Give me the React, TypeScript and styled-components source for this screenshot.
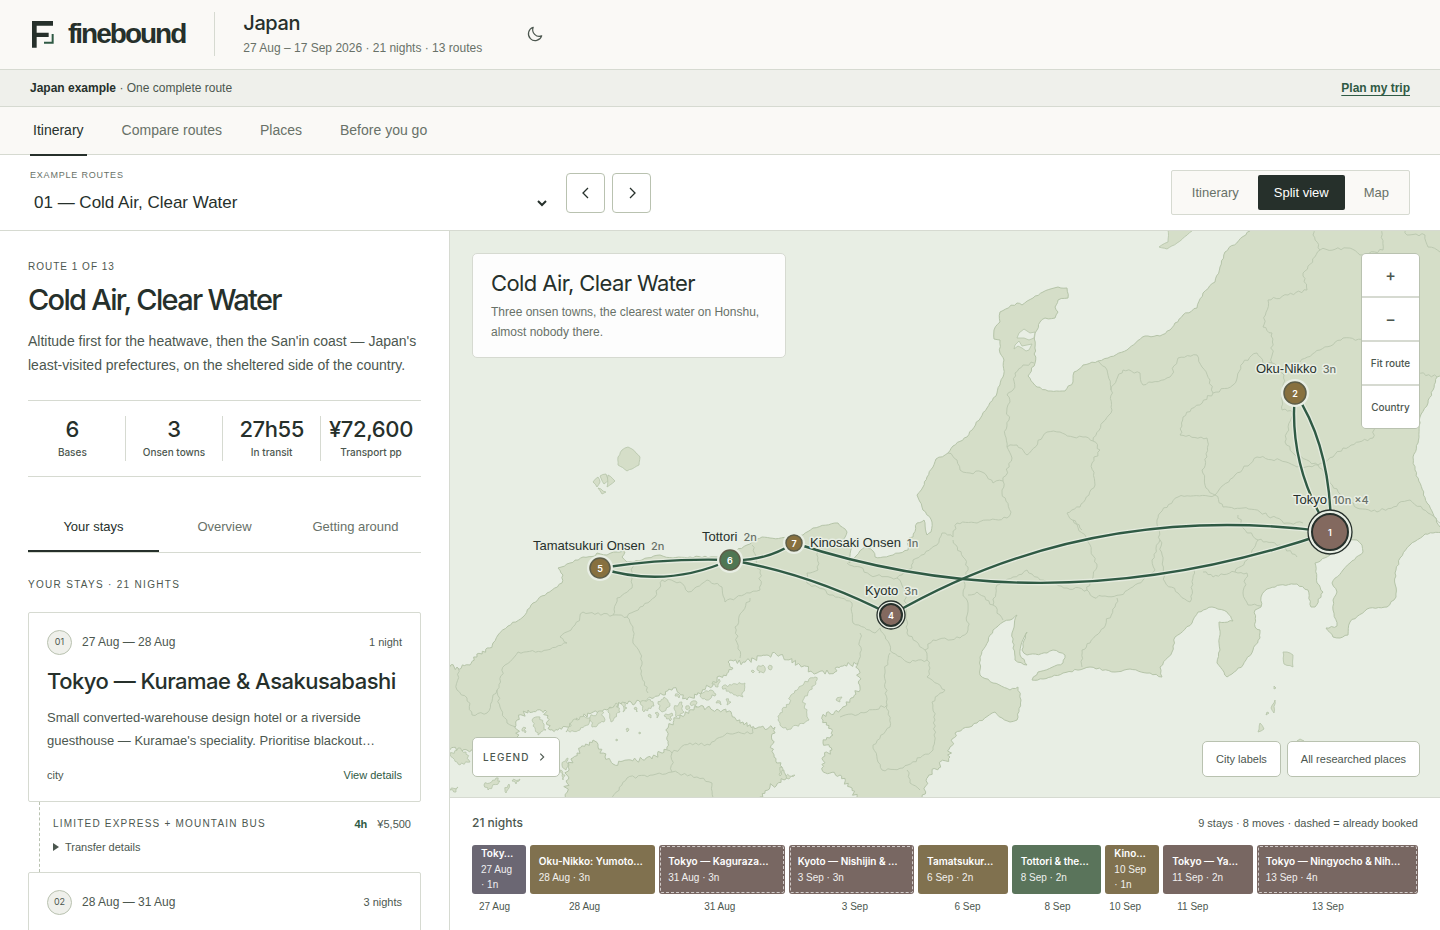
import React from "react";
import styled, { createGlobalStyle, css } from "styled-components";

const c = {
  ink: "#26302b",
  text: "#4c574f",
  muted: "#687168",
  line: "#d6dad1",
  lineStrong: "#b9c2b0",
  paper: "#faf9f6",
  tint: "#eff0eb",
  green: "#2f5a44",
  sea: "#e8eee4",
  land: "#d5dec8",
  coast: "#b5c4a8",
};

const sans = `"Liberation Sans", Arial, sans-serif`;
const wide = `Inter, "Liberation Sans", sans-serif`;

const GlobalStyle = createGlobalStyle`
  *, *::before, *::after { box-sizing: border-box; }
  html, body { margin: 0; background: #fff; }
  body { font-family: ${sans}; color: ${c.ink}; font-size: 13px; }
  button, select { font: inherit; color: inherit; cursor: pointer; }
  h1, h2, h3, p { margin: 0; }
`;

const Page = styled.div`
  display: flex;
  flex-direction: column;
  height: 100vh;
  min-height: 720px;
  overflow: hidden;
`;

/* Header */
const Header = styled.header`
  display: flex;
  align-items: center;
  height: 70px;
  flex: none;
  padding: 0 30px 1px;
  background: ${c.paper};
  border-bottom: 1px solid ${c.line};
`;
const Brand = styled.a`
  display: flex;
  align-items: center;
  gap: 14px;
  padding-right: 29px;
  color: ${c.ink};
  text-decoration: none;
  font: 700 28px/44px ${sans};
  letter-spacing: -2px;
  svg { width: 24px; height: 27px; }
`;
const TripInfo = styled.div`
  padding-left: 28px;
  border-left: 1px solid ${c.line};
  height: 44px;
  display: flex;
  flex-direction: column;
  justify-content: center;
  gap: 4px;
`;
const TripName = styled.div`
  font: 500 20px/24px ${wide};
  letter-spacing: -0.4px;
`;
const TripMeta = styled.div`
  font-size: 12px;
  line-height: 18px;
  color: ${c.muted};
`;
const ThemeButton = styled.button`
  display: grid;
  place-items: center;
  width: 36px;
  height: 36px;
  margin-left: 35px;
  border: 0;
  background: none;
  color: ${c.text};
`;

const Banner = styled.div`
  display: flex;
  align-items: center;
  justify-content: space-between;
  flex: none;
  height: 37px;
  padding: 0 30px;
  background: ${c.tint};
  border-bottom: 1px solid ${c.line};
  font-size: 12px;
  color: ${c.text};
  strong { color: ${c.ink}; font-weight: 700; }
  a {
    color: ${c.green};
    font-weight: 700;
    text-decoration: underline;
    text-underline-offset: 3px;
  }
`;

const MainNav = styled.nav`
  display: flex;
  gap: 32px;
  flex: none;
  height: 48px;
  padding: 0 30px;
  background: ${c.paper};
  border-bottom: 1px solid ${c.line};
`;
const NavLink = styled.a<{ $active?: boolean }>`
  display: flex;
  align-items: center;
  height: 49px;
  padding: 0 3px 2px;
  font-size: 14px;
  font-weight: 500;
  text-decoration: none;
  color: ${(p) => (p.$active ? c.ink : c.muted)};
  border-bottom: 2px solid ${(p) => (p.$active ? c.ink : "transparent")};
`;

const RouteBar = styled.div`
  display: flex;
  align-items: center;
  flex: none;
  height: 76px;
  padding: 0 30px;
  border-bottom: 1px solid ${c.line};
`;
const RoutePicker = styled.div`
  width: 522px;
  flex: 0 1 auto;
  label {
    display: block;
    font-size: 9px;
    line-height: 14px;
    letter-spacing: 0.8px;
    color: ${c.muted};
    margin-top: 3px;
  }
`;
const SelectWrap = styled.div`
  display: flex;
  align-items: center;
  margin-top: 3px;
  select {
    appearance: none;
    flex: 1;
    height: 36px;
    padding: 0 4px;
    border: 0;
    background: transparent;
    font-size: 17px;
  }
  svg { margin: 0 3px 0 -17px; pointer-events: none; }
`;
const Stepper = styled.div`
  display: flex;
  gap: 7px;
  margin-left: 14px;
`;
const StepButton = styled.button`
  display: grid;
  place-items: center;
  width: 39px;
  height: 40px;
  padding: 0;
  border: 1px solid ${c.lineStrong};
  border-radius: 4px;
  background: #fff;
`;
const ViewSwitch = styled.div`
  display: flex;
  gap: 3px;
  margin-left: auto;
  padding: 4px;
  background: ${c.paper};
  border: 1px solid ${c.line};
  border-radius: 2px;
`;
const ViewButton = styled.button<{ $active?: boolean }>`
  height: 35px;
  padding: 0 16px;
  border: 0;
  border-radius: 2px;
  font-size: 13px;
  background: ${(p) => (p.$active ? c.ink : "transparent")};
  color: ${(p) => (p.$active ? "#fff" : c.muted)};
`;

/* Workspace */
const Workspace = styled.main`
  display: flex;
  flex: 1;
  min-height: 0;
`;
const Panel = styled.section`
  flex: 0 0 450px;
  padding: 28px;
  border-right: 1px solid ${c.line};
  overflow-y: auto;
  scrollbar-width: none;
`;
const Eyebrow = styled.div`
  font-size: 10px;
  line-height: 16px;
  letter-spacing: 1px;
  color: ${c.text};
`;
const Title = styled.h1`
  margin-top: 7px;
  font: 500 29px/36px ${wide};
  letter-spacing: -1.7px;
`;
const Lead = styled.p`
  margin-top: 11px;
  font-size: 14px;
  line-height: 24px;
  color: ${c.text};
`;
const Stats = styled.dl`
  display: grid;
  grid-template-columns: repeat(3, 1fr) 100px;
  margin: 23px 0 0;
  padding: 15px 0;
  border: solid ${c.line};
  border-width: 1px 0;
`;
const Stat = styled.div`
  display: flex;
  flex-direction: column-reverse;
  align-items: center;
  height: 45px;
  padding-bottom: 1px;
  justify-content: space-between;
  border-right: 1px solid ${c.line};
  &:first-child { padding-right: 8px; }
  &:last-child { border-right: 0; }
  dt { font: 500 10px/16px ${wide}; color: ${c.text}; }
  dd { margin: 0; font: 500 22px/26px ${wide}; letter-spacing: -0.4px; }
`;
const Tabs = styled.div`
  display: grid;
  grid-template-columns: repeat(3, 1fr);
  margin-top: 25px;
  border-bottom: 1px solid ${c.line};
`;
const Tab = styled.button<{ $active?: boolean }>`
  height: 50px;
  padding: 0;
  border: 0;
  border-bottom: 2px solid ${(p) => (p.$active ? c.ink : "transparent")};
  background: none;
  font-size: 13px;
  font-weight: 500;
  color: ${(p) => (p.$active ? c.ink : c.muted)};
`;
const SectionLabel = styled.h2`
  margin: 24px 0 19px;
  font-size: 10px;
  line-height: 16px;
  font-weight: 400;
  letter-spacing: 1.3px;
  color: ${c.text};
`;
const Card = styled.article`
  min-height: 190px;
  padding: 16px 18px 14px;
  border: 1px solid ${c.line};
  border-radius: 2px;
`;
const CardTop = styled.div`
  display: flex;
  align-items: center;
  gap: 10px;
  color: ${c.text};
  font-size: 12px;
  line-height: 26px;
`;
const Index = styled.span`
  display: grid;
  place-items: center;
  width: 25px;
  height: 25px;
  border: 1px solid ${c.lineStrong};
  border-radius: 50%;
  background: ${c.tint};
  font: 400 9px/12px ${wide};
`;
const Nights = styled.span`
  margin-left: auto;
  font-size: 11px;
`;
const CardTitle = styled.h3`
  margin-top: 10px;
  font: 500 22px/32px ${wide};
  letter-spacing: -0.5px;
  white-space: nowrap;
`;
const CardText = styled.p`
  margin-top: 9px;
  font-size: 13px;
  line-height: 23px;
  color: ${c.text};
`;
const CardFoot = styled.div`
  display: flex;
  justify-content: space-between;
  margin-top: 12px;
  font-size: 11px;
  line-height: 22px;
  color: ${c.text};
  button {
    border: 0;
    padding: 0;
    background: none;
    color: ${c.green};
  }
`;
const Transfer = styled.div`
  height: 70px;
  margin-left: 11px;
  padding: 14px 10px 0 13px;
  border-left: 1px dashed ${c.lineStrong};
  font-size: 11px;
  line-height: 16px;
  color: ${c.text};
  summary { margin-top: 7px; list-style: none; display: flex; align-items: center; gap: 6px; }
`;
const TransferTop = styled.div`
  display: flex;
  span:first-child { flex: 1; font-size: 10px; letter-spacing: 1.2px; }
  strong { margin-right: 10px; color: ${c.green}; }
`;

/* Map side */
const MapSide = styled.section`
  display: flex;
  flex: 1;
  flex-direction: column;
  min-width: 0;
`;
const MapArea = styled.div`
  position: relative;
  flex: 1;
  min-height: 0;
  background: ${c.sea};
  border-bottom: 1px solid ${c.line};
`;
const MapSvg = styled.svg`
  display: block;
  width: 100%;
  height: 100%;
  position: absolute;
  inset: 0;
`;
const MapCard = styled.div`
  position: absolute;
  top: 22px;
  left: 22px;
  width: 314px;
  padding: 12px 18px 15px;
  background: #fdfdfd;
  border: 1px solid ${c.line};
  border-radius: 5px;
  h2 { font: 400 22px/34px ${wide}; letter-spacing: -0.6px; }
  p { margin-top: 2px; font-size: 12px; line-height: 20px; color: ${c.muted}; }
`;
const Zoom = styled.div`
  position: absolute;
  top: 22px;
  right: 20px;
  width: 59px;
  display: flex;
  flex-direction: column;
  gap: 2px;
  background: ${c.line};
  border: 1px solid ${c.lineStrong};
  border-radius: 5px;
  overflow: hidden;
`;
const ZoomButton = styled.button<{ $glyph?: boolean }>`
  height: 42px;
  padding: 0;
  border: 0;
  background: #fff;
  color: ${c.text};
  font: 500 ${(p) => (p.$glyph ? 16 : 10)}px ${wide};
`;
const floating = css`
  background: #fff;
  border: 1px solid ${c.lineStrong};
  border-radius: 5px;
  color: ${c.text};
  font-size: 11px;
  font-weight: 500;
`;
const Legend = styled.button`
  ${floating}
  position: absolute;
  left: 22px;
  bottom: 20px;
  display: flex;
  align-items: center;
  justify-content: space-between;
  width: 88px;
  height: 40px;
  padding: 0 11px 0 10px;
  font: 500 10px ${wide};
  letter-spacing: 1.1px;
`;
const MapToggles = styled.div`
  position: absolute;
  right: 20px;
  bottom: 20px;
  display: flex;
  gap: 6px;
`;
const MapToggle = styled.button`
  ${floating}
  height: 36px;
  padding: 0 13px 1px;
`;

/* Timeline */
const Timeline = styled.div`
  flex: none;
  height: 132px;
  padding: 15px 22px 0;
`;
const TimelineHead = styled.div`
  display: flex;
  justify-content: space-between;
  align-items: center;
  line-height: 20px;
  font-size: 11px;
  color: ${c.text};
  strong { font: 500 12px/20px ${wide}; }
`;
const Blocks = styled.div`
  display: flex;
  gap: 4px;
  margin-top: 12px;
`;
const Block = styled.button<{ $nights: number; $tone: string; $booked?: boolean }>`
  box-sizing: content-box;
  flex: ${(p) => p.$nights} 1 0;
  min-width: 0;
  height: 47px;
  padding: 0 9px 2px;
  border: 0;
  border-radius: 3px;
  background: ${(p) => p.$tone};
  outline: ${(p) => (p.$booked ? "1px dashed rgba(255,255,255,.65)" : "none")};
  outline-offset: -2px;
  color: #fff;
  text-align: left;
  font-size: 10px;
  line-height: 15px;
  strong {
    display: block;
    font: 600 10px/17px ${wide};
    white-space: nowrap;
  }
  span { display: block; opacity: .9; }
`;
const Dates = styled.div`
  display: flex;
  margin-top: 5px;
  font-size: 10px;
  line-height: 16px;
  color: ${c.text};
`;
const DateCell = styled.span<{ $nights: number }>`
  flex: ${(p) => p.$nights} 1 0;
  text-align: center;
`;

const tones = { plum: "#6b6773", gold: "#80714f", rose: "#786762", green: "#5a745b" };
const stays = [
  { name: "Toky…", date: "27 Aug", n: 1, tone: tones.plum },
  { name: "Oku-Nikko: Yumoto…", date: "28 Aug", n: 3, tone: tones.gold },
  { name: "Tokyo — Kaguraza…", date: "31 Aug", n: 3, tone: tones.rose, booked: true },
  { name: "Kyoto — Nishijin & …", date: "3 Sep", n: 3, tone: tones.rose, booked: true },
  { name: "Tamatsukur…", date: "6 Sep", n: 2, tone: tones.gold },
  { name: "Tottori & the…", date: "8 Sep", n: 2, tone: tones.green },
  { name: "Kino…", date: "10 Sep", n: 1, tone: tones.gold },
  { name: "Tokyo — Ya…", date: "11 Sep", n: 2, tone: tones.rose },
  { name: "Tokyo — Ningyocho & Nih…", date: "13 Sep", n: 4, tone: tones.rose, booked: true },
];

/* Map geometry: coordinate pairs separated by spaces */
const honshu =
  "440,668 457,667 470,665 477,657 493,643 498,635 508,626 523,617 533,603 547,593 562,583 563,575 558,568 570,563 583,557 595,556 597,553 607,555 617,552 625,552 622,557 627,562 642,560 660,555 673,558 690,557 717,557 733,552 750,544 762,537 770,538 787,538 803,535 813,528 838,523 847,532 843,542 852,547 849,563 856,556 865,547 873,551 875,557 883,557 893,555 908,550 907,540 913,537 917,523 924,520 927,535 931,532 932,522 922,507 917,495 923,487 927,477 933,467 936,459 948,453 953,446 967,437 987,408 997,393 1003,377 1004,360 1000,353 1000,340 994,339 994,330 1000,322 1000,312 1017,303 1022,305 1033,298 1043,292 1058,287 1067,288 1068,298 1058,300 1055,307 1058,312 1055,318 1045,318 1040,322 1037,330 1035,333 1035,363 1028,376 1037,387 1048,391 1065,391 1073,382 1074,372 1083,365 1098,361 1108,358 1127,350 1145,336 1160,336 1170,330 1183,315 1197,308 1203,293 1215,282 1220,267 1225,252 1250,231 1260,220 1450,220 1450,370 1437,377 1433,390 1428,403 1420,417 1418,443 1413,457 1415,470 1427,503 1440,527 1450,532 1433,533 1425,534 1410,545 1400,558 1395,573 1396,597 1387,607 1367,609 1350,622 1348,635 1340,638 1333,637 1326,628 1337,626 1333,610 1333,600 1337,592 1332,583 1343,570 1350,563 1363,552 1362,545 1357,540 1347,540 1330,555 1315,563 1317,583 1323,592 1315,607 1311,607 1308,590 1297,584 1280,585 1267,589 1261,597 1261,607 1255,610 1255,627 1260,630 1260,638 1253,650 1243,665 1227,677 1217,663 1220,650 1219,622 1233,621 1227,612 1212,607 1198,612 1192,623 1175,637 1172,652 1160,667 1162,677 1150,673 1130,669 1115,672 1090,667 1063,673 1043,679 1032,680 1038,672 1063,663 1065,655 1053,650 1047,653 1027,655 1022,650 1027,632 1021,645 1020,655 1027,665 1015,660 1012,633 1017,615 1010,620 1003,622 993,630 980,657 980,675 993,683 1010,690 1018,687 1021,700 1017,720 1010,722 1002,718 995,712 977,723 955,733 950,747 950,757 932,772 922,797 920,810 860,810 857,797 850,787 840,775 822,770 823,757 832,750 823,743 833,735 823,720 822,717 840,710 860,687 858,663 837,667 835,672 817,673 800,665 780,655 767,655 743,662 728,662 733,668 717,680 697,695 687,700 673,688 663,695 643,702 623,703 607,710 583,717 567,727 550,730 545,710 528,710 517,720 517,737 495,745 467,750 440,750";
const shikoku =
  "563,810 567,783 568,767 577,753 593,740 598,747 605,757 613,764 627,760 652,759 667,747 668,728 677,718 697,707 723,710 743,722 757,728 775,727 772,740 773,753 782,767 787,777 770,787 760,797 755,810";
const islands = [
  "815,677 817,680 803,700 809,720 787,730 780,725 778,720 780,713 790,702 790,697 810,678",
  "628,447 632,449 640,457 639,465 632,469 627,471 618,465 618,457 622,450",
  "593,482 598,477 600,482 597,487",
  "600,476 606,474 609,480 604,484",
  "608,475 615,481 607,487",
  "598,488 606,492 602,494",
  "1168,220 1168,242 1159,247 1167,249 1177,243 1192,231 1200,220",
  "722,687 745,683 743,697 730,693",
  "1283,652 1287,652 1293,655 1293,667 1284,664",
  "1275,700 1274,713 1271,708",
  "1260,723 1264,729 1258,732",
  "1267,712 1269,713 1266,715",
  "1274,686 1276,688 1274,689",
  "1297,741 1300,739 1304,741",
  "532,720 540,717 546,730 538,735",
  "522,729 526,728 525,733",
  "572,722 584,716 592,720 580,730 566,732",
  "590,717 602,711 604,722 592,727",
  "608,712 616,703 620,712 611,722",
  "622,702 627,708 623,712",
  "640,703 650,699 654,706 644,712",
  "658,704 664,697 670,706 662,712",
  "674,708 682,702 684,712 676,717",
  "664,716 672,713 670,721",
  "655,713 659,714 657,718",
  "648,716 651,715 651,718",
  "634,709 637,708 637,712",
  "686,706 690,708 687,710",
  "675,696 678,694 679,698",
  "700,696 710,690 716,694 706,700",
  "712,684 719,679 718,687",
  "690,704 696,701 697,707",
  "726,699 731,702 727,705",
  "716,703 720,701 721,705",
  "757,668 763,665 765,671 759,673",
  "768,667 772,666 771,670",
  "751,671 753,670 753,673",
  "836,700 842,697 840,702",
  "450,755 458,748 466,752 470,762 460,765",
  "484,785 496,778 500,781 488,790",
  "505,790 509,784 506,793",
  "512,781 520,779 516,784",
  "450,790 458,787 456,792",
  "562,765 568,758 566,770",
  "565,775 560,770 563,780",
  "626,729 629,730 627,732",
  "639,732 641,733 639,734",
  "616,739 618,740 616,741",
  "780,767 783,770 780,776",
  "786,776 795,775 789,779",
];
const borders = [
  "948,453 957,460 960,470 970,473 982,472 993,483 1003,481 1012,458 1007,447 1005,435 1009,420 1007,408 1010,402 1007,395 1013,390 1015,373 1023,365 1034,363",
  "1003,481 1002,493 1011,512 1007,518 987,520 977,523 957,523 953,537 942,533 937,545 913,560 912,568 897,578 870,575 860,567 847,563",
  "897,578 905,592 907,633 925,650 933,640 960,638 968,630 967,600 963,593 968,567 963,557 953,540",
  "1007,447 1017,445 1027,455 1047,432 1060,432 1073,437 1083,437 1093,441 1103,422 1111,413 1111,390 1107,370 1098,361",
  "1111,390 1123,370 1140,373 1143,385 1170,377 1178,358 1197,355 1202,367 1210,380 1213,393 1233,385 1243,363 1257,353 1263,363 1272,363 1272,333 1263,327 1268,300 1288,295 1307,290 1303,273 1320,250 1313,235 1313,225",
  "1320,250 1347,248 1363,255 1383,250 1382,225",
  "1402,225 1407,235 1425,235 1428,247 1440,252",
  "1300,362 1320,350 1343,338 1377,342 1400,350 1415,372 1437,377",
  "1272,363 1284,375 1282,410 1293,412 1285,442 1295,455 1318,465 1333,457 1343,448 1373,438 1375,427 1385,385 1410,376",
  "1213,393 1183,417 1180,435 1207,438 1207,457 1202,470 1206,488 1215,495 1235,475 1257,457 1280,460 1297,467 1318,465 1330,483 1357,508 1377,512 1410,500 1428,513 1440,523",
  "1215,495 1223,507 1243,508 1260,512 1287,523 1303,523",
  "1215,495 1178,497 1160,513 1157,520 1160,540 1152,560 1155,570 1143,580 1120,595 1093,597 1087,590 1090,583 1097,567 1087,540 1073,520",
  "1117,598 1115,607 1100,632 1090,643 1082,650 1082,667",
  "1160,540 1165,582 1178,593 1190,602 1194,570",
  "1203,572 1213,577 1235,572 1247,573 1243,593 1248,605 1261,606",
  "1235,572 1247,560 1258,540 1243,528 1238,515",
  "1258,540 1280,545 1297,557",
  "1093,441 1100,450 1092,463 1095,485 1080,507 1067,513 1082,530",
  "1087,590 1067,588 1040,580 1027,570 1013,577 997,585 993,605 977,592 968,595",
  "993,605 1003,620",
  "818,545 818,570 807,573 807,583 833,595 852,603 853,623 875,633 880,628 893,653 907,662 927,660 925,650",
  "927,660 930,668 927,677 945,690 932,702 935,720 933,750 903,768 882,770 873,745 890,727 887,705 885,670 890,653",
  "887,705 867,712 840,717",
  "860,633 860,653 858,663",
  "907,770 910,783 920,790",
  "632,563 632,588 617,598 613,615 627,617 633,627 633,643 640,653 642,677 648,693",
  "613,615 583,612 575,625 560,637 567,643 547,650 518,652 505,665 497,690 500,707 507,723 516,727",
  "458,668 457,690 467,698 472,715 487,713 493,695 497,690",
  "627,617 640,607 655,597 662,580 680,582 688,592 707,580 722,587 725,602 750,593 760,590 760,573 752,545",
  "750,598 735,627 740,658",
  "612,800 627,778 653,775 672,772 672,753 667,750",
  "672,753 690,743 710,745 727,733 753,733 753,727",
  "672,772 697,777 712,783 713,800",
];

// Adds small repeatable bends so that straight runs read as natural coastline.
function rugged(points: string, amount: number, closed: boolean) {
  const pts = points.split(" ").map((p) => p.split(",").map(Number));
  let seed = pts.length * 97 + pts[0][0];
  const rand = () => {
    seed = (seed * 16807) % 2147483647;
    return seed / 2147483647 - 0.5;
  };
  const all = closed ? [...pts, pts[0]] : pts;
  let d = `M${all[0][0]} ${all[0][1]}`;
  for (let i = 1; i < all.length; i++) {
    const [x0, y0] = all[i - 1];
    const [x1, y1] = all[i];
    const len = Math.hypot(x1 - x0, y1 - y0);
    // The Inland Sea and the Kii coast are far more broken than the rest.
    const isBroken = closed && x0 < 960 && y0 > 652;
    const steps = Math.max(1, Math.round(len / (isBroken ? 2 : 3)));
    for (let s = 1; s < steps; s++) {
      const t = s / steps;
      const off = rand() * amount * (isBroken ? 3 : 1);
      d += `L${(x0 + (x1 - x0) * t - ((y1 - y0) / len) * off).toFixed(1)} ${(y0 + (y1 - y0) * t + ((x1 - x0) / len) * off).toFixed(1)}`;
    }
    d += `L${x1} ${y1}`;
  }
  return closed ? d + "Z" : d;
}

const legs = [
  "M1330 532Q1288 466 1295 393",
  "M1295 393Q1331 446 1331 532",
  "M891 615Q1089 500 1330 532",
  "M794 543Q1052 628 1330 532",
  "M891 615Q812 574 730 560",
  "M730 560Q665 558 600 568",
  "M730 560Q665 589 600 568",
  "M730 560Q765 562 794 543",
];
const stops = [
  { n: 5, x: 600, y: 568, r: 10, fill: "#87703f", name: "Tamatsukuri Onsen", extra: "2n", lx: 533, ly: 550 },
  { n: 6, x: 730, y: 560, r: 10, fill: "#4f7653", name: "Tottori", extra: "2n", lx: 702, ly: 541 },
  { n: 7, x: 794, y: 543, r: 8, fill: "#87703f", name: "Kinosaki Onsen", extra: "1n", lx: 810, ly: 547 },
  { n: 4, x: 891, y: 615, r: 11, fill: "#83695f", name: "Kyoto", extra: "3n", lx: 865, ly: 595, ring: 14 },
  { n: 2, x: 1295, y: 393, r: 11, fill: "#87703f", name: "Oku-Nikko", extra: "3n", lx: 1256, ly: 373 },
  { n: 1, x: 1330, y: 532, r: 18, fill: "#83695f", name: "Tokyo", extra: "10n ×4", lx: 1293, ly: 504, ring: 22 },
];

const PlaceName = styled.text`
  font: 500 13px ${sans};
  fill: ${c.ink};
  stroke: ${c.sea};
  stroke-width: 3px;
  stroke-linejoin: round;
  paint-order: stroke;
`;
const PlaceNights = styled.tspan`
  font: 500 11px ${wide};
  fill: ${c.muted};
`;
const StopNumber = styled.text`
  font: 600 9px ${wide};
  fill: #fff;
  text-anchor: middle;
`;

function RouteMap() {
  return (
    <MapSvg viewBox="450 231 990 566" preserveAspectRatio="xMidYMid slice" role="img" aria-label="Route map of Japan">
      <g fill={c.land} stroke={c.coast} strokeWidth="1" strokeLinejoin="round">
        <path d={rugged(honshu, 1.8, true)} />
        <path d={rugged(shikoku, 1.8, true)} />
        {islands.map((p) => (
          <path key={p} d={rugged(p, 1, true)} strokeWidth="0.8" />
        ))}
      </g>
      <g fill={c.sea} stroke={c.coast} strokeWidth="0.8">
        <path d="M1035 332L1030 333L1024 329L1019 333L1017 338L1024 338L1029 340L1034 338Z" />
        <path d="M1014 349L1015 345L1019 341L1022 346L1032 344L1029 350L1026 351L1022 348L1018 346Z" />
      </g>
      <g fill="none" stroke="#b9c6ae" strokeWidth="0.9" strokeLinejoin="round">
        {borders.map((p) => (
          <path key={p} d={rugged(p, 3, false)} />
        ))}
      </g>
      <g fill="none" strokeLinecap="butt">
        {legs.map((d) => (
          <path key={d} d={d} stroke={c.sea} strokeWidth="5" opacity="0.8" />
        ))}
        {legs.map((d) => (
          <path key={d} d={d} stroke={c.green} strokeWidth="2.4" />
        ))}
      </g>
      {stops.map((s) => (
        <g key={s.n}>
          {s.ring ? (
            <circle cx={s.x} cy={s.y} r={s.ring} fill={c.sea} stroke={c.ink} strokeWidth="1.3" />
          ) : (
            <circle cx={s.x} cy={s.y} r={s.r + 3} fill={c.sea} />
          )}
          <circle cx={s.x} cy={s.y} r={s.r} fill={s.fill} stroke={s.ring ? c.ink : "#5d5d48"} strokeWidth={s.ring ? 2 : 1.5} />
          <StopNumber x={s.x} y={s.y + 4}>{s.n}</StopNumber>
          <PlaceName x={s.lx} y={s.ly}>
            {s.name}
            <PlaceNights dx="6">{s.extra}</PlaceNights>
          </PlaceName>
        </g>
      ))}
    </MapSvg>
  );
}

const Chevron = ({ d, size = 14, width = 1.3 }: { d: string; size?: number; width?: number }) => (
  <svg width={size} height={size} viewBox="0 0 14 14" fill="none" stroke="currentColor" strokeWidth={width} aria-hidden="true">
    <path d={d} />
  </svg>
);

export default function App() {
  return (
    <Page>
      <GlobalStyle />
      <Header>
        <Brand href="#home">
          <svg viewBox="0 0 72 81" aria-hidden="true">
            <path d="M6 0H69V14H20V35H56V48H20V80H6Z" fill={c.ink} />
            <path d="M68 39V65H42" fill="none" stroke={c.green} strokeWidth="6" />
          </svg>
          finebound
        </Brand>
        <TripInfo>
          <TripName>Japan</TripName>
          <TripMeta>27 Aug – 17 Sep 2026 · 21 nights · 13 routes</TripMeta>
        </TripInfo>
        <ThemeButton aria-label="Switch theme">
          <svg width="16" height="16" viewBox="0 0 16 16" fill="none" stroke="currentColor" strokeWidth="1.2" strokeLinejoin="round" aria-hidden="true">
            <path d="M6.2 1.3A6.8 6.8 0 1 0 14.7 9.9A6.6 6.6 0 0 1 6.2 1.3Z" />
          </svg>
        </ThemeButton>
      </Header>

      <Banner>
        <span><strong>Japan example</strong> · One complete route</span>
        <a href="#plan">Plan my trip</a>
      </Banner>

      <MainNav>
        <NavLink href="#itinerary" $active>Itinerary</NavLink>
        <NavLink href="#compare">Compare routes</NavLink>
        <NavLink href="#places">Places</NavLink>
        <NavLink href="#before">Before you go</NavLink>
      </MainNav>

      <RouteBar>
        <RoutePicker>
          <label htmlFor="route">EXAMPLE ROUTES</label>
          <SelectWrap>
            <select id="route">
              <option>01 — Cold Air, Clear Water</option>
            </select>
            <Chevron d="M3 5L7 9L11 5" size={14} width={2} />
          </SelectWrap>
        </RoutePicker>
        <Stepper>
          <StepButton aria-label="Previous route"><Chevron d="M9 2L4 7L9 12" /></StepButton>
          <StepButton aria-label="Next route"><Chevron d="M5 2L10 7L5 12" /></StepButton>
        </Stepper>
        <ViewSwitch>
          <ViewButton>Itinerary</ViewButton>
          <ViewButton $active>Split view</ViewButton>
          <ViewButton>Map</ViewButton>
        </ViewSwitch>
      </RouteBar>

      <Workspace>
        <Panel>
          <Eyebrow>ROUTE 1 OF 13</Eyebrow>
          <Title>Cold Air, Clear Water</Title>
          <Lead>Altitude first for the heatwave, then the San'in coast — Japan's least-visited prefectures, on the sheltered side of the country.</Lead>
          <Stats>
            <Stat><dt>Bases</dt><dd>6</dd></Stat>
            <Stat><dt>Onsen towns</dt><dd>3</dd></Stat>
            <Stat><dt>In transit</dt><dd>27h55</dd></Stat>
            <Stat><dt>Transport pp</dt><dd>¥72,600</dd></Stat>
          </Stats>
          <Tabs>
            <Tab $active>Your stays</Tab>
            <Tab>Overview</Tab>
            <Tab>Getting around</Tab>
          </Tabs>
          <SectionLabel>YOUR STAYS · 21 NIGHTS</SectionLabel>
          <Card>
            <CardTop><Index>01</Index>27 Aug — 28 Aug<Nights>1 night</Nights></CardTop>
            <CardTitle>Tokyo — Kuramae & Asakusabashi</CardTitle>
            <CardText>Small converted-warehouse design hotel or a riverside guesthouse — Kuramae's speciality. Prioritise blackout…</CardText>
            <CardFoot><span>city</span><button>View details</button></CardFoot>
          </Card>
          <Transfer>
            <TransferTop><span>LIMITED EXPRESS + MOUNTAIN BUS</span><strong>4h</strong><span>¥5,500</span></TransferTop>
            <details>
              <summary>
                <svg width="6" height="8" viewBox="0 0 6 8" aria-hidden="true"><path d="M0 0L6 4L0 8Z" fill="currentColor" /></svg>
                Transfer details
              </summary>
            </details>
          </Transfer>
          <Card>
            <CardTop><Index>02</Index>28 Aug — 31 Aug<Nights>3 nights</Nights></CardTop>
          </Card>
        </Panel>

        <MapSide>
          <MapArea>
            <RouteMap />
            <MapCard>
              <h2>Cold Air, Clear Water</h2>
              <p>Three onsen towns, the clearest water on Honshu, almost nobody there.</p>
            </MapCard>
            <Zoom>
              <ZoomButton $glyph aria-label="Zoom in">+</ZoomButton>
              <ZoomButton $glyph aria-label="Zoom out">−</ZoomButton>
              <ZoomButton>Fit route</ZoomButton>
              <ZoomButton>Country</ZoomButton>
            </Zoom>
            <Legend>LEGEND <Chevron d="M5 3L9 7L5 11" size={12} /></Legend>
            <MapToggles>
              <MapToggle>City labels</MapToggle>
              <MapToggle>All researched places</MapToggle>
            </MapToggles>
          </MapArea>
          <Timeline>
            <TimelineHead><strong>21 nights</strong><span>9 stays · 8 moves · dashed = already booked</span></TimelineHead>
            <Blocks>
              {stays.map((s) => (
                <Block key={s.date} $nights={s.n} $tone={s.tone} $booked={s.booked}>
                  <strong>{s.name}</strong>
                  <span>{s.date} · {s.n}n</span>
                </Block>
              ))}
            </Blocks>
            <Dates>
              {stays.map((s) => (
                <DateCell key={s.date} $nights={s.n}>{s.date}</DateCell>
              ))}
            </Dates>
          </Timeline>
        </MapSide>
      </Workspace>
    </Page>
  );
}
